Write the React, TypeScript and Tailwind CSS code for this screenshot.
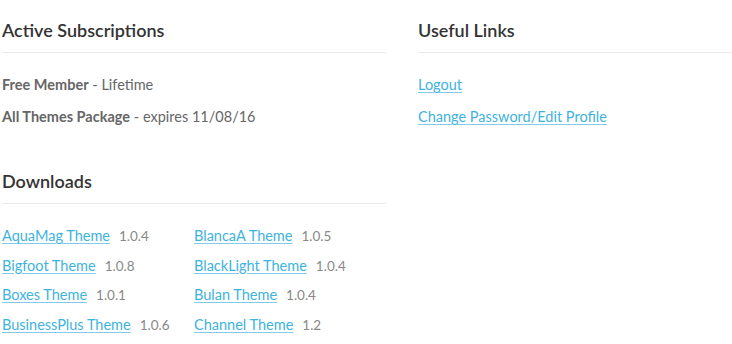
const SUBSCRIPTIONS = [
  { name: "Free Member", detail: "Lifetime" },
  { name: "All Themes Package", detail: "expires 11/08/16" },
];

const DOWNLOADS = [
  [
    { title: "AquaMag Theme", version: "1.0.4" },
    { title: "Bigfoot Theme", version: "1.0.8" },
    { title: "Boxes Theme", version: "1.0.1" },
    { title: "BusinessPlus Theme", version: "1.0.6" },
  ],
  [
    { title: "BlancaA Theme", version: "1.0.5" },
    { title: "BlackLight Theme", version: "1.0.4" },
    { title: "Bulan Theme", version: "1.0.4" },
    { title: "Channel Theme", version: "1.2" },
  ],
];

function Heading({ children }: { children: React.ReactNode }) {
  return (
    <div className="border-b border-[#ebebeb] pb-[11px]">
      <h2 className="text-[18px] font-semibold leading-[22px] text-[#333]">{children}</h2>
    </div>
  );
}

export default function App() {
  return (
    <div className="w-[732px] h-[344px] overflow-hidden bg-white pl-[2px] pt-[19px] font-['Lato',sans-serif]">
      <div className="flex gap-[32px]">
        {/* Left column */}
        <div className="w-[384px] shrink-0">
          <Heading>Active Subscriptions</Heading>
          <div className="pt-[23px] flex flex-col gap-[14px] text-[14.5px] leading-[18px] text-[#666]">
            {SUBSCRIPTIONS.map((s) => (
              <p key={s.name}>
                <span className="font-bold">{s.name}</span> - {s.detail}
              </p>
            ))}
          </div>

          <div className="mt-[44px]">
            <Heading>Downloads</Heading>
            <div className="pt-[23px] flex text-[14.5px] leading-[18px]">
              {DOWNLOADS.map((col, ci) => (
                <div key={ci} className="w-[196px] flex flex-col gap-[11.5px]">
                  {col.map((d) => (
                    <div key={d.title} className="flex items-baseline gap-[9px]">
                      <a href="#" className="text-[#3eb3e0] underline underline-offset-2 decoration-[#7fcbe9]">
                        {d.title}
                      </a>
                      <span className="text-[13.5px] text-[#888]">{d.version}</span>
                    </div>
                  ))}
                </div>
              ))}
            </div>
          </div>
        </div>

        {/* Right column */}
        <div className="flex-1">
          <Heading>Useful Links</Heading>
          <div className="pt-[23px] flex flex-col gap-[14px] text-[14.5px] leading-[18px]">
            <a href="#" className="text-[#3eb3e0] underline underline-offset-2 decoration-[#7fcbe9]">Logout</a>
            <a href="#" className="text-[#3eb3e0] underline underline-offset-2 decoration-[#7fcbe9]">Change Password/Edit Profile</a>
          </div>
        </div>
      </div>
    </div>
  );
}
